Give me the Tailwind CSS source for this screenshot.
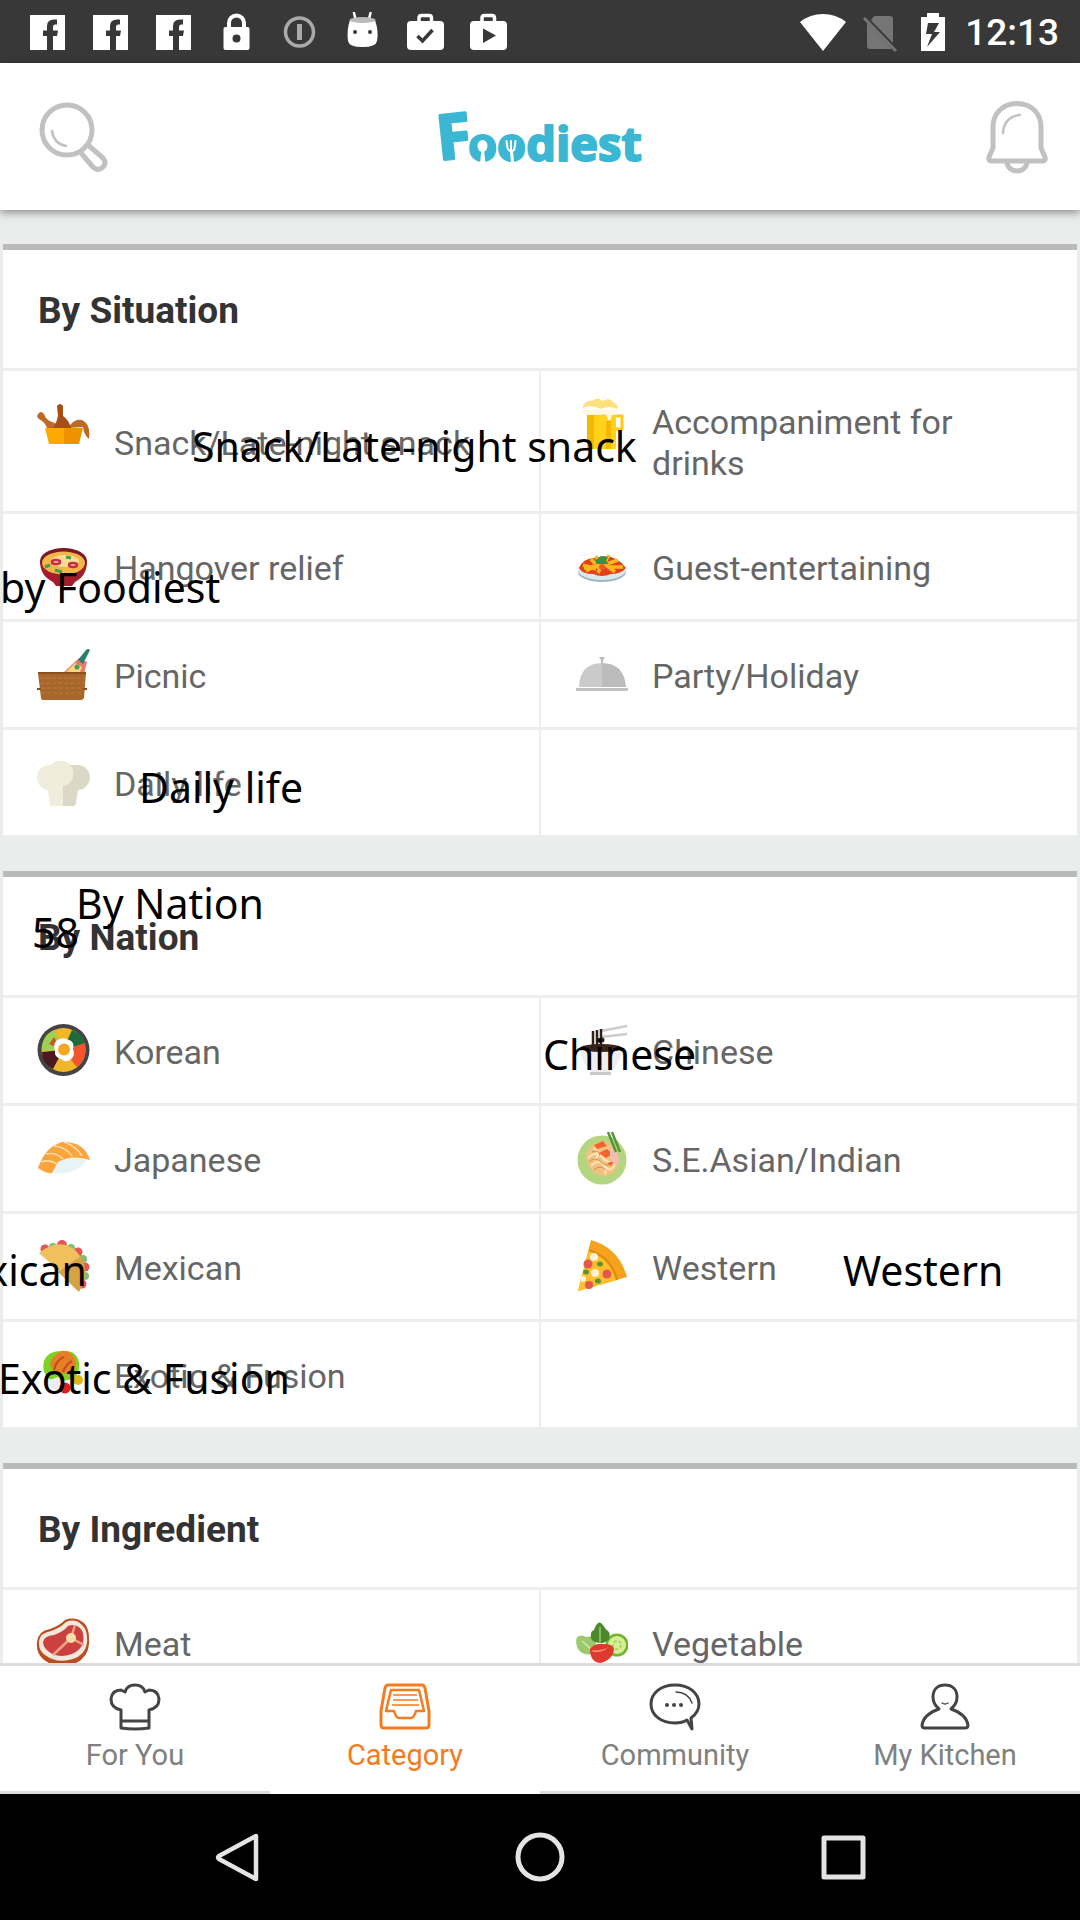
<!DOCTYPE html>
<html lang="en">
<head>
<meta charset="utf-8">
<meta name="viewport" content="width=device-width, initial-scale=1">
<title>Foodiest – Category</title>
<script src="https://cdn.jsdelivr.net/npm/@tailwindcss/browser@4"></script>
</head>
<body class="flex h-screen flex-col overflow-hidden bg-[#ebeded] font-[Roboto,sans-serif]">

<!-- Status bar -->
<div class="flex h-[63px] shrink-0 items-center bg-[#383838] pl-7 pr-[21px] text-white">
  <div class="flex gap-[23px]">
    <svg class="size-10" viewBox="0 0 40 40"><path fill="#fff" fill-rule="evenodd" d="M2 3H37V38H25V24H29L30 18.500H25V15Q25 12.500 27 12.500H29V7.500H26Q19 7.500 19 14V18.500H15V24H19V38H2Z"/></svg>
    <svg class="size-10" viewBox="0 0 40 40"><path fill="#fff" fill-rule="evenodd" d="M2 3H37V38H25V24H29L30 18.500H25V15Q25 12.500 27 12.500H29V7.500H26Q19 7.500 19 14V18.500H15V24H19V38H2Z"/></svg>
    <svg class="size-10" viewBox="0 0 40 40"><path fill="#fff" fill-rule="evenodd" d="M2 3H37V38H25V24H29L30 18.500H25V15Q25 12.500 27 12.500H29V7.500H26Q19 7.500 19 14V18.500H15V24H19V38H2Z"/></svg>
    <svg class="size-10" viewBox="0 0 40 40"><path fill="none" stroke="#fff" stroke-width="4" d="M12 17V11a7.500 7.500 0 0 1 15 0V17"/><rect x="6.500" y="15" width="26" height="23" rx="2" fill="#fff"/><circle cx="19.500" cy="26.500" r="4" fill="#383838"/></svg>
    <svg class="size-10" viewBox="0 0 40 40"><circle cx="19.500" cy="20" r="14" fill="none" stroke="#aaa" stroke-width="3.500"/><path stroke="#aaa" stroke-width="5" d="M19.500 12V28"/></svg>
    <svg class="size-10" viewBox="0 0 40 40"><path stroke="#fff" stroke-width="2.500" stroke-linecap="round" d="M11 1l1.500 6M27.500 1L26 7"/><path fill="#fff" d="M7 8Q19 12 32 8Q36 20 34 29Q33 35 19.500 35Q6 35 5 29Q3.500 18 7 8Z"/><ellipse cx="19.500" cy="8" rx="13" ry="3" fill="#bbb"/><circle cx="12" cy="20" r="2" fill="#383838"/><circle cx="27" cy="20" r="2" fill="#383838"/></svg>
    <svg class="size-10" viewBox="0 0 40 40"><path fill="none" stroke="#fff" stroke-width="3.500" d="M13 10V6Q13 3.500 15.500 3.500H23Q25.500 3.500 25.500 6V10"/><rect x="1" y="9" width="37" height="29" rx="4" fill="#fff"/><path fill="none" stroke="#383838" stroke-width="3.500" d="M11.500 24l5 5 10-11"/></svg>
    <svg class="size-10" viewBox="0 0 40 40"><path fill="none" stroke="#fff" stroke-width="3.500" d="M13 10V6Q13 3.500 15.500 3.500H23Q25.500 3.500 25.500 6V10"/><rect x="1" y="9" width="37" height="29" rx="4" fill="#fff"/><path fill="#383838" d="M14 16.500L27 23.500L14 31Z"/></svg>
  </div>
  <div class="ml-auto flex items-center">
    <svg class="h-10 w-[46px]" viewBox="0 0 46 40"><path fill="#fff" d="M0 10Q10 2 23 2T46 10L23 39Z"/></svg>
    <svg class="ml-4 h-10 w-9" viewBox="0 0 36 40"><path fill="#757575" d="M12 4H28Q31 4 31 7V31L9 8.500ZM5 11L30 37H8Q5 37 5 34Z"/><path stroke="#757575" stroke-width="3" d="M2 6L34 39"/></svg>
    <svg class="ml-[22px] h-10 w-[26px]" viewBox="0 0 26 40"><path fill="#fff" fill-rule="evenodd" d="M7 1H19V5H25V39H1V5H7ZM8 11L6 22H12L7 35L20 20H14L19 11Z"/></svg>
    <time class="ml-[19px] pt-[2px] text-[37px] leading-[44px] font-medium">12:13</time>
  </div>
</div>

<!-- App bar -->
<header class="z-10 flex h-[147px] shrink-0 items-center justify-between bg-white pr-[23px] pl-[33px] shadow-[0_3px_8px_rgba(0,0,0,0.4)]">
  <button type="button" aria-label="Search" class="flex w-20 justify-center">
    <svg class="h-[74px] w-[70px]" viewBox="0 0 70 74" fill="none" stroke="#c1c1c1"><circle cx="29" cy="30" r="25" stroke-width="5"/><path stroke-width="2.500" stroke-linecap="round" d="M14 31Q16 44 28 46"/><path stroke-width="5" stroke-linejoin="round" d="M43 53L55 67Q60 72 65 67Q69 63 65 58L50 45"/></svg>
  </button>
  <svg class="h-[70px] w-[212px] overflow-visible" viewBox="0 0 212 70" role="img" aria-label="Foodiest" fill="#3cb7d3" stroke="#3cb7d3" stroke-linejoin="round" font-family="Open Sans, sans-serif" font-weight="700">
    <text x="0" y="58" font-size="62" stroke-width="3" transform="rotate(-6 0 58)">F</text>
    <text x="29" y="59" font-size="47" stroke-width="2">oodiest</text>
    <g stroke="none"><circle cx="44" cy="46" r="13"/><circle cx="72.500" cy="46" r="13"/></g>
    <g fill="#fff" stroke="none"><ellipse cx="43.500" cy="44" rx="5" ry="6"/><path d="M42.500 48H45L46.500 61H41Z"/></g>
    <g fill="none" stroke="#fff" stroke-width="2" stroke-linecap="round"><path d="M67.500 39l1 7q1 3 4 3t3-3l1-7M72 39v9"/><path stroke-width="3" d="M72.500 49l1 11"/></g>
  </svg>
  <button type="button" aria-label="Notifications" class="flex w-20 justify-center">
    <svg class="h-[74px] w-[62px]" viewBox="0 0 62 74" fill="none" stroke="#c1c1c1"><path stroke-width="5" stroke-linejoin="round" d="M31 3.500C16 3.500 7 14 7 27V48L3 57Q2 61 5 61H57Q60 61 59 57L55 48V27C55 14 46 3.500 31 3.500Z"/><path stroke-width="2.500" stroke-linecap="round" d="M17 33Q18 17 34 15"/><path stroke-width="5" d="M21 62a10 9 0 0 0 20 0"/></svg>
  </button>
</header>

<main class="min-h-0 flex-1 overflow-x-hidden overflow-y-auto [scrollbar-width:none]">
<div class="relative flex flex-col gap-9 px-[3px] pt-[34px]">

  <section>
    <h2 class="border-t-6 border-[#bababa] bg-white pt-10 pb-9 pl-[35px] text-[37px] leading-[42px] font-bold text-[#333]">By Situation</h2>
    <ul class="grid grid-cols-2 gap-x-[2px] gap-y-[3px] bg-[#eee] pt-[3px] text-[34px] leading-[41px] text-[#666]">
      <li class="flex bg-white"><a href="#snack" class="flex w-full items-center gap-6 px-[33px]">
        <svg class="mt-[26px] mb-[25px] size-[54px] shrink-0 self-start" viewBox="0 0 54 54"><path fill="#bd6a26" d="M2 17Q5 13 8 17Q10 23 16 25Q21 26 22 31H11Q9 25 3 22Q0 20 2 17ZM32 31Q38 21 46 23Q55 27 53 42Q48 38 47 30Z"/><path fill="#a74e15" d="M21 9Q24 5 27 9V19Q33 23 35 31H17Q21 25 22 19Z"/><path fill="#ffa800" d="M9 31H28V47H13Z"/><path fill="#ee9200" d="M28 31H47L43 47H28Z"/></svg>
        <span class="pt-[31px] pb-[27px]">Snack/Late-night snack</span></a></li>
      <li class="flex bg-white"><a href="#drinks" class="flex w-full items-center gap-6 px-[33px]">
        <svg class="mt-[26px] mb-[25px] size-[54px] shrink-0 self-start" viewBox="0 0 54 54"><path fill="none" stroke="#fdc816" stroke-width="3" d="M41 19H48V32H41"/><path fill="#ffd21c" d="M13 14H42V52H13Z"/><path fill="#f5b800" d="M13 17H20V52H13ZM32 24H37V52H32Z"/><path fill="#fff8de" d="M8 13H43V18H38Q36 28 33 20Q31 15 27 18H8Z"/><path fill="#ffe07a" d="M9 9Q13 3 18 4Q24-1 28 4Q36 0 39 5Q45 8 43 12Q35 8 27 12Q17 7 9 11Z"/></svg>
        <span class="pt-[31px] pb-[27px]">Accompaniment for drinks</span></a></li>
      <li class="flex bg-white"><a href="#hangover" class="flex w-full items-center gap-6 px-[33px]">
        <svg class="mt-[26px] mb-[25px] size-[54px] shrink-0 self-start" viewBox="0 0 54 54"><path fill="#a21e2a" d="M4 21H51Q51 36 39 42L36 46H20L17 42Q4 36 4 21Z"/><ellipse cx="27.500" cy="21" rx="23.500" ry="13" fill="#7d1722"/><ellipse cx="27.500" cy="23" rx="21.500" ry="11.500" fill="#f4b64a"/><ellipse cx="29" cy="21" rx="14" ry="6" fill="#ffdc91"/><g fill="none" stroke="#c52c4b" stroke-width="2.500"><ellipse cx="20" cy="22" rx="4" ry="2"/><ellipse cx="37" cy="25" rx="4" ry="2"/></g><path stroke="#37a34a" stroke-width="3" d="M9 27l5-2M19 30l7 2M30 17l5 1"/></svg>
        <span class="pt-[31px] pb-[27px]">Hangover relief</span></a></li>
      <li class="flex bg-white"><a href="#guests" class="flex w-full items-center gap-6 px-[33px]">
        <svg class="mt-[26px] mb-[25px] size-[54px] shrink-0 self-start" viewBox="0 0 54 54"><ellipse cx="28" cy="32" rx="24" ry="10" fill="#9fb6c2"/><ellipse cx="28" cy="30" rx="24" ry="10" fill="#dce7ec"/><path fill="#e3401f" d="M5 28Q9 18 21 18Q40 12 52 28Q47 34 37 34Q28 38 19 34Q8 34 5 28Z"/><path fill="none" stroke="#fbb81c" stroke-width="3.500" d="M9 25l13 4M12 31l14-8M17 19l8 9M22 16l4 8M35 15l-5 9M44 20l-14 5M49 27l-15 0M41 32l-9-7M24 33l4-9M10 28l12-2"/><path fill="#369446" d="M22 20l5-4 7 1-2 4 3 3-7 0-6 0Z"/><circle cx="28" cy="27" r="3" fill="#f2592d"/></svg>
        <span class="pt-[31px] pb-[27px]">Guest-entertaining</span></a></li>
      <li class="flex bg-white"><a href="#picnic" class="flex w-full items-center gap-6 px-[33px]">
        <svg class="mt-[26px] mb-[25px] size-[54px] shrink-0 self-start" viewBox="0 0 54 54"><path fill="#e8796d" d="M26 26L43 10L51 14L48 26Z"/><path fill="#f9d77c" d="M28 26l11-11 7 4-3 7Z"/><path fill="#238267" d="M50 2Q52 0 54 2L47 16L42 12Z"/><circle cx="41" cy="19" r="2.500" fill="#4b9b60"/><path fill="#a8662c" d="M2 25H50L48 50Q47 52 45 52H7Q5 52 5 50Z"/><path stroke="#bb7d40" stroke-width="1" stroke-dasharray="4 2" d="M4 30H49M4 35H49M5 40H48M5 45H47"/><path stroke="#8b4e1d" stroke-width="2" d="M2 25H50M1 41H5M47 41H51"/></svg>
        <span class="pt-[31px] pb-[27px]">Picnic</span></a></li>
      <li class="flex bg-white"><a href="#party" class="flex w-full items-center gap-6 px-[33px]">
        <svg class="mt-[26px] mb-[25px] size-[54px] shrink-0 self-start" viewBox="0 0 54 54"><path fill="#bababa" d="M25 9H31L29 12V16H27V12Z"/><path fill="#cacaca" d="M5 39Q6 15 28 15V39Z"/><path fill="#bcbcbc" d="M28 15Q50 15 52 39H28Z"/><path fill="#c2c2c2" d="M2 40H54V43H2Z"/></svg>
        <span class="pt-[31px] pb-[27px]">Party/Holiday</span></a></li>
      <li class="flex bg-white"><a href="#daily" class="flex w-full items-center gap-6 px-[33px]">
        <svg class="mt-[26px] mb-[25px] size-[54px] shrink-0 self-start" viewBox="0 0 54 54"><path fill="#dbd9c6" d="M26 9H41A12 12 0 0 1 42 34L40 47Q40 50 37 50H26Z"/><path fill="#f0eddd" d="M14 50Q12 34 12 34A12.500 12.500 0 1 1 15 9A13 13 0 0 1 37 14Q39 28 27 30V50Z"/></svg>
        <span class="pt-[31px] pb-[27px]">Daily life</span></a></li>
      <li class="bg-white"></li>
    </ul>
  </section>

  <section>
    <h2 class="border-t-6 border-[#b8baba] bg-white pt-10 pb-9 pl-[35px] text-[37px] leading-[42px] font-bold text-[#333]">By Nation</h2>
    <ul class="grid grid-cols-2 gap-x-[2px] gap-y-[3px] bg-[#eee] pt-[3px] text-[34px] leading-[41px] text-[#666]">
      <li class="flex bg-white"><a href="#korean" class="flex w-full items-center gap-6 px-[33px]">
        <svg class="mt-[26px] mb-[25px] size-[54px] shrink-0 self-start" viewBox="0 0 54 54"><circle cx="27.500" cy="26" r="26" fill="#454346"/><circle cx="27.500" cy="26" r="22" fill="#f2b62b"/><path fill="#9fd04f" d="M27 26L6 27Q5 12 18 6Z"/><path fill="#1c6b38" d="M27 26L36 6Q48 11 49 20Z"/><path fill="#f2542d" d="M27 26L49 19Q52 35 41 43Z"/><path fill="#4b1a20" d="M27 26L17 45Q5 39 6 28Z"/><path fill="#c45a2c" d="M26 26L13 20L18 13Z"/><path fill="#fff" d="M20 17Q26 12 33 16Q39 18 37 25Q40 32 34 36Q29 39 25 35Q18 33 19 27Q17 21 20 17Z"/><circle cx="28" cy="25.500" r="6" fill="#f5a623"/></svg>
        <span class="pt-[31px] pb-[27px]">Korean</span></a></li>
      <li class="flex bg-white"><a href="#chinese" class="flex w-full items-center gap-6 px-[33px]">
        <svg class="mt-[26px] mb-[25px] size-[54px] shrink-0 self-start" viewBox="0 0 54 54"><path stroke="#ccc" stroke-width="2.500" d="M27 7L53 2M27 13L53 10"/><path fill="#eee" d="M6 24H48Q47 39 37 47V50H17V47Q7 39 6 24Z"/><path fill="#c9c9c9" d="M16 48H37V51H16Z"/><ellipse cx="27" cy="24" rx="21" ry="4" fill="#3c251a"/><path stroke="#2e221c" stroke-width="2.500" d="M19 7V24M23 6V24M27 5V24"/><circle cx="28" cy="16" r="2.500" fill="#2e221c"/></svg>
        <span class="pt-[31px] pb-[27px]">Chinese</span></a></li>
      <li class="flex bg-white"><a href="#japanese" class="flex w-full items-center gap-6 px-[33px]">
        <svg class="mt-[26px] mb-[25px] size-[54px] shrink-0 self-start" viewBox="0 0 54 54"><path fill="#e8f3f6" d="M16 39Q22 25 38 23Q48 22 50 28Q46 38 30 41Q18 43 16 39Z"/><path fill="#fba43b" d="M2 36Q9 15 26 10Q48 9 54 28Q36 22 22 30L16 41Q10 42 2 36Z"/><path fill="none" stroke="#ffdcae" stroke-width="1.500" d="M5 30Q14 27 21 32M10 22Q20 20 27 27M18 14Q30 15 36 24M28 10Q40 14 46 24"/></svg>
        <span class="pt-[31px] pb-[27px]">Japanese</span></a></li>
      <li class="flex bg-white"><a href="#se-asian" class="flex w-full items-center gap-6 px-[33px]">
        <svg class="mt-[26px] mb-[25px] size-[54px] shrink-0 self-start" viewBox="0 0 54 54"><circle cx="28" cy="28" r="24.500" fill="#b4d680"/><path fill="#f0c17f" d="M12 22Q18 8 30 10Q43 13 45 26Q44 42 31 44Q14 44 12 22Z"/><path fill="none" stroke="#fce4b6" stroke-width="2" d="M14 26q8-8 15 0t14 1M17 34q8-8 14 0t10-2M20 16q8 6 0 12M28 32q5 5 3 10"/><path fill="none" stroke="#d28c4d" stroke-width="1" d="M15 30q6-6 12 0t12 1M20 38q6-6 12 0M18 20q7-3 8 4"/><path fill="#f4652e" d="M20 13l9-4 4 5-10 3ZM25 21l8-4 6 5-7 4ZM33 31l7-2-3 5Z"/><path fill="#eebfb5" d="M36 16l7 5 3 10-5 2-5-8Z"/><path stroke="#569536" stroke-width="2.500" d="M34 0L42 20M38 0L46 20"/></svg>
        <span class="pt-[31px] pb-[27px]">S.E.Asian/Indian</span></a></li>
      <li class="flex bg-white"><a href="#mexican" class="flex w-full items-center gap-6 px-[33px]">
        <svg class="mt-[26px] mb-[25px] size-[54px] shrink-0 self-start" viewBox="0 0 54 54"><g fill="#e45555"><circle cx="9" cy="9" r="4.500"/><circle cx="26" cy="5" r="5"/><circle cx="42" cy="12" r="4.500"/><circle cx="49" cy="27" r="4.500"/><circle cx="46" cy="44" r="4.500"/></g><g fill="#7fbe73"><circle cx="17" cy="7" r="4"/><circle cx="35" cy="8" r="4"/><circle cx="47" cy="19" r="4"/><circle cx="49" cy="36" r="4"/></g><path fill="#efc05c" d="M3 13Q16 2 30 5Q42 9 47 22L27 34Z"/><path fill="#d7a244" d="M45 16Q54 33 43 52L22 32Z"/></svg>
        <span class="pt-[31px] pb-[27px]">Mexican</span></a></li>
      <li class="flex bg-white"><a href="#western" class="flex w-full items-center gap-6 px-[33px]">
        <svg class="mt-[26px] mb-[25px] size-[54px] shrink-0 self-start" viewBox="0 0 54 54"><path fill="#f5a31d" d="M17 0Q45 8 53 37L4 51Z"/><path fill="#ffbf2d" d="M15 10Q37 17 43 40L4 51Z"/><path fill="none" stroke="#dc8912" stroke-width="2" d="M15 10Q37 17 43 40"/><g fill="#e4574b"><circle cx="14" cy="24" r="4.500"/><circle cx="33" cy="34" r="4.500"/><circle cx="15" cy="45" r="4"/></g><g fill="#fff1d6"><circle cx="20" cy="17" r="4"/><circle cx="21" cy="33" r="4"/><circle cx="9" cy="39" r="3"/></g><g fill="#5b9530"><ellipse cx="26" cy="24" rx="3" ry="2.500"/><ellipse cx="12" cy="32" rx="3" ry="2.500"/><ellipse cx="24" cy="41" rx="3" ry="2.500"/></g></svg>
        <span class="pt-[31px] pb-[27px]">Western</span></a></li>
      <li class="flex bg-white"><a href="#fusion" class="flex w-full items-center gap-6 px-[33px]">
        <svg class="mt-[26px] mb-[25px] size-[54px] shrink-0 self-start" viewBox="0 0 54 54"><path fill="#7ed320" d="M8 13Q12 3 24 3Q40 1 43 14Q44 26 38 30Q26 36 13 31Q5 24 8 13Z"/><path fill="#eee" d="M8 34l14-5 8 8-10 6Z"/><path fill="#e87d28" d="M14 16Q16 7 26 3Q35 2 39 11Q42 22 33 25Q17 28 14 16Z"/><path fill="none" stroke="#ba5317" stroke-width="2" d="M18 22Q20 12 28 9M27 24Q30 16 36 13"/><circle cx="29" cy="40" r="5.500" fill="#dc1f25"/><circle cx="42" cy="32" r="5" fill="#e0b51a"/></svg>
        <span class="pt-[31px] pb-[27px]">Exotic &amp; Fusion</span></a></li>
      <li class="bg-white"></li>
    </ul>
  </section>

  <section>
    <h2 class="border-t-6 border-[#b8baba] bg-white pt-10 pb-9 pl-[35px] text-[37px] leading-[42px] font-bold text-[#333]">By Ingredient</h2>
    <ul class="grid grid-cols-2 gap-x-[2px] gap-y-[3px] bg-[#eee] pt-[3px] text-[34px] leading-[41px] text-[#666]">
      <li class="flex bg-white"><a href="#meat" class="flex w-full items-center gap-6 px-[33px]">
        <svg class="mt-[26px] mb-[25px] size-[54px] shrink-0 self-start" viewBox="0 0 54 54"><path fill="#ba4e20" d="M1 26Q2 15 14 13Q23 10 29 4Q39 0 48 7Q54 13 53 28Q52 42 38 48Q20 54 7 43Q0 37 1 26Z"/><path fill="#f4e8dc" d="M3 25Q4 17 15 15Q24 12 30 6Q39 2 46 9Q52 14 51 27Q49 39 37 43Q21 48 9 39Q2 34 3 25Z"/><path fill="#cb4141" d="M7 26Q8 20 18 19Q27 16 32 10Q39 7 44 12Q49 17 47 27Q45 34 36 38Q21 43 12 35Q7 31 7 26Z"/><path stroke="#f5a183" stroke-width="2.500" d="M35 22L39 9M35 22L48 29M35 22L17 39"/><circle cx="35" cy="22" r="5" fill="#f8dfa7"/></svg>
        <span class="pt-[31px] pb-[27px]">Meat</span></a></li>
      <li class="flex bg-white"><a href="#vegetable" class="flex w-full items-center gap-6 px-[33px]">
        <svg class="mt-[26px] mb-[25px] size-[54px] shrink-0 self-start" viewBox="0 0 54 54"><path fill="#9bc96e" d="M3 21Q8 18 12 21Q21 19 22 27L19 38Q8 40 4 33Q1 26 3 21Z"/><path stroke="#d4e9b2" stroke-width="1.500" d="M8 25L18 34"/><circle cx="43" cy="29" r="11.500" fill="#72b52d"/><circle cx="43" cy="29" r="9" fill="#d5ee97"/><circle cx="43" cy="29" r="4" fill="none" stroke="#a9d75e" stroke-width="2" stroke-dasharray="3 2"/><path fill="#4b8a2b" d="M25 27Q15 26 17 18Q17 15 20 14Q24 2 29 9Q31 13 35 16Q38 25 28 27Z"/><path stroke="#a3c873" stroke-width="1.500" d="M26 11V27"/><path fill="#df3a2e" d="M16 33Q20 27 30 28Q39 28 40 33Q39 44 26 47Q16 46 16 33Z"/><path fill="#f48b78" d="M18 34Q28 35 34 31Q30 37 19 36Z"/></svg>
        <span class="pt-[31px] pb-[27px]">Vegetable</span></a></li>
    </ul>
  </section>

  <!-- Floating captions drawn over the list -->
  <div class="pointer-events-none absolute inset-0 overflow-hidden font-['Noto_Sans',sans-serif] text-[41px] leading-10 whitespace-nowrap text-black">
    <span class="absolute top-[216px] left-[192px]">Snack/Late-night snack</span>
    <span class="absolute top-[357px] left-0">by Foodiest</span>
    <span class="absolute top-[557px] left-[139px]">Daily life</span>
    <span class="absolute top-[673px] left-[76px]">By Nation</span>
    <span class="absolute top-[702px] left-8">58</span>
    <span class="absolute top-[824px] left-[543px]">Chinese</span>
    <span class="absolute top-[1040px] left-[-73px]">Mexican</span>
    <span class="absolute top-[1040px] left-[843px]">Western</span>
    <span class="absolute top-[1148px] left-[-2px]">Exotic &amp; Fusion</span>
  </div>
</div>
</main>

<!-- Tab bar -->
<nav class="grid shrink-0 grid-cols-4 border-t-3 border-[#ddd] bg-white text-center text-[29px] leading-9 text-[#808080]">
  <a href="#for-you" class="flex flex-col items-center gap-[6px] border-b-3 border-[#ddd] pt-[17px] pb-[18px]">
    <svg class="h-12 w-[52px]" viewBox="0 0 52 48" fill="none" stroke="#444" stroke-width="3" stroke-linejoin="round"><path d="M12 45V27Q2 25 2 16Q3 7 12 7Q14 8 16 9Q18 2 26 2T36 9Q38 8 40 7Q49 7 50 16Q50 25 40 27V45Q26 47 12 45ZM12 38H40"/></svg>
    <span>For You</span></a>
  <a href="#category" aria-current="page" class="flex flex-col items-center gap-[6px] border-b-3 border-white pt-[17px] pb-[18px] text-[#f47b20]">
    <svg class="h-12 w-[52px]" viewBox="0 0 52 48" fill="none" stroke="#f47b20" stroke-linejoin="round"><path stroke-width="3" d="M9 2H43Q45 2 46 5L50 28V42Q50 45 47 45H5Q2 45 2 42V28L6 5Q7 2 9 2Z"/><path stroke-width="2.500" d="M7 28L12 7H40L45 28H37Q35 35 32 35H20Q17 35 15 28Z"/><path stroke-width="1.500" d="M14 12H38M14 17H39M13 22H40"/></svg>
    <span>Category</span></a>
  <a href="#community" class="flex flex-col items-center gap-[6px] border-b-3 border-[#ddd] pt-[17px] pb-[18px]">
    <svg class="h-12 w-[52px]" viewBox="0 0 52 48" fill="none" stroke="#444" stroke-linejoin="round" stroke-linecap="round"><path stroke-width="3" d="M38 37Q33 40 26 40C12 40 2 32 2 21S12 2 26 2S50 10 50 21Q50 29 42 35L43 46Z"/><path stroke-width="1.500" d="M27 9Q39 9 43 20"/><g fill="#444" stroke="none"><circle cx="18" cy="22" r="2"/><circle cx="25" cy="22" r="2"/><circle cx="32" cy="22" r="2"/></g></svg>
    <span>Community</span></a>
  <a href="#my-kitchen" class="flex flex-col items-center gap-[6px] border-b-3 border-[#ddd] pt-[17px] pb-[18px]">
    <svg class="h-12 w-[52px]" viewBox="0 0 52 48" fill="none" stroke="#444" stroke-linejoin="round" stroke-linecap="round"><path stroke-width="3" d="M20 26Q14 21 14 14C14 6 19 2 26 2S38 6 38 14Q38 21 32 26Q47 31 49 42Q49 45 46 45H6Q3 45 3 42Q5 31 20 26Z"/><path stroke-width="1.500" d="M23 20Q26 22 29 20"/></svg>
    <span>My Kitchen</span></a>
</nav>

<!-- System navigation -->
<div class="flex h-[126px] shrink-0 items-center bg-black px-[85px]">
  <button type="button" aria-label="Back" class="flex flex-1 justify-center"><svg class="size-[54px]" viewBox="0 0 54 54" fill="none" stroke="#e4e4e4" stroke-width="4.500" stroke-linejoin="round"><path d="M46 6V49L9 29Q7 27.500 9 26Z"/></svg></button>
  <button type="button" aria-label="Home" class="flex flex-1 justify-center"><svg class="size-[54px]" viewBox="0 0 54 54" fill="none" stroke="#e4e4e4" stroke-width="5"><circle cx="27" cy="27" r="22"/></svg></button>
  <button type="button" aria-label="Recent apps" class="flex flex-1 justify-center"><svg class="size-[54px]" viewBox="0 0 54 54" fill="none" stroke="#e4e4e4" stroke-width="5" stroke-linejoin="round"><rect x="8" y="8" width="39" height="39"/></svg></button>
</div>
</body>
</html>
